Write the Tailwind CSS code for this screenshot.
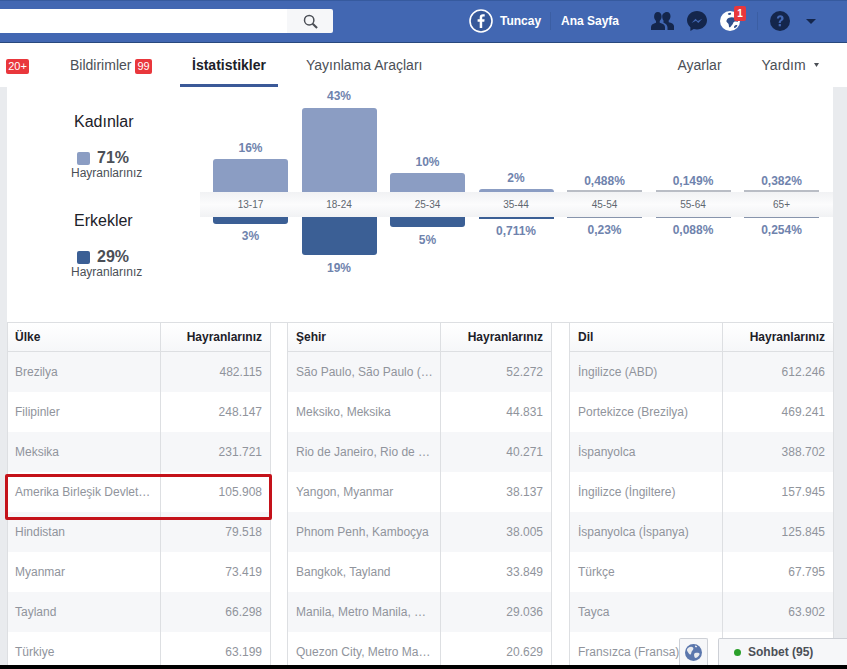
<!DOCTYPE html>
<html lang="tr">
<head>
<meta charset="utf-8">
<title>İstatistikler</title>
<script src="https://cdn.jsdelivr.net/npm/@tailwindcss/browser@4"></script>
</head>
<body class="m-0">
<div class="relative w-[847px] h-[669px] overflow-hidden bg-[#e9ebee] font-['Liberation_Sans',Arial,sans-serif]">

  <!-- Top bar -->
  <header class="h-[43px] pb-[1px] bg-[#4267b2] border-t border-t-[#365a9e] border-b border-b-[#29487d] flex items-center">
    <div class="w-[333px] h-[24px] flex rounded-r-[2px] overflow-hidden">
      <div class="w-[287px] bg-white"></div>
      <div class="w-[46px] bg-[#f6f7f9] flex items-center justify-center">
        <svg class="w-[15px] h-[15px]" viewBox="0 0 16 16" fill="none" stroke="#4b4f56" stroke-width="1.6"><circle cx="6.600" cy="6.600" r="5"/><path d="M10.300 10.300 15 15" stroke-width="2.200"/></svg>
      </div>
    </div>
    <div class="w-[136px] shrink-0"></div>
    <svg class="w-[24px] h-[24px] shrink-0" viewBox="0 0 24 24"><circle cx="12" cy="12" r="11" fill="#365899" stroke="#fff" stroke-width="1.600"/><path d="M13.200 19v-6.300h2.100l.3-2.500h-2.400V8.700c0-.7.2-1.200 1.200-1.200h1.300V5.300c-.2 0-1-.1-1.900-.1-1.900 0-3.100 1.100-3.100 3.200v1.800H8.600v2.500h2.100V19z" fill="#fff"/></svg>
    <span class="ml-[7px] w-[40px] text-[12px] font-bold text-white">Tuncay</span>
    <div class="ml-[10px] w-px h-[18px] bg-[#3b5ea3]"></div>
    <span class="ml-[10px] w-[58px] text-[12px] font-bold text-white whitespace-nowrap">Ana Sayfa</span>
    <svg class="ml-[32px] w-[23px] h-[18px] shrink-0" viewBox="0 0 23 18" fill="#14264c"><path d="M16 0c2.200 0 3.500 1.800 3.500 4.200 0 1.900-.8 3.400-1.800 4.300v1.800c2.600.6 5.300 1.800 5.300 3.700V18h-6.500v-2.500c0-2.400-1.800-3.800-4-4.800V8.500c-.8-1-1.300-2.600-1.300-4.300C11.200 1.800 13.800 0 16 0z"/><path d="M6.800 0c2.300 0 3.800 1.900 3.800 4.500 0 2-.8 3.500-1.900 4.400v1.900c2.900.7 5.300 2 5.300 4.200V18H0v-2.900c0-2.200 2.400-3.600 5-4.300V8.900C3.900 8 3.100 6.500 3.100 4.500 3.100 1.900 4.500 0 6.800 0z"/></svg>
    <svg class="ml-[13px] w-[20px] h-[20px] shrink-0" viewBox="0 0 20 20"><path d="M10 0C4.500 0 0 4.100 0 9.300c0 2.800 1.300 5.200 3.400 6.900V20l3.300-1.900c1 .3 2.100.5 3.300.5 5.500 0 10-4.100 10-9.300S15.500 0 10 0z" fill="#14264c"/><path d="M4.500 12l4-4.300 2.300 2.300 4.500-2.300-4 4.300-2.300-2.300z" fill="#4267b2"/></svg>
    <div class="relative ml-[13px] w-[20px] h-[20px] shrink-0">
      <svg class="w-[20px] h-[20px]" viewBox="0 0 20 20"><circle cx="10" cy="10" r="10" fill="#fff"/><path d="M8.500 7c2-1.200 4.500-1 6.500-.2s3.500 2 3 3.700c-1 .8-2.500-.3-3.700.2s-1.300 2.500-2.300 3.300-1.500 2.800-2.500 2.300-.3-2.800-1.300-3.800-2.200-1.700-1.700-3 .9-1.600 2-2.500z" fill="#2f4e8c"/><path d="M8 2.500c1-.7 2.500-1 3-.3s-.5 1.800-1.500 1.800S7.300 3.200 8 2.500zM15 14.500c1-.5 2.300-.7 2.300 0s-1.800 2.700-2.800 2.500-.4-2 .5-2.500z" fill="#2f4e8c"/></svg>
      <span class="absolute left-[14px] top-[-5px] w-[12px] h-[15px] rounded-[2px] bg-[#e9373c] text-white text-[10px] font-bold leading-[15px] text-center">1</span>
    </div>
    <div class="ml-[17px] w-px h-[18px] bg-[#3b5ea3]"></div>
    <svg class="ml-[12px] w-[20px] h-[20px] shrink-0" viewBox="0 0 20 20"><circle cx="10" cy="10" r="10" fill="#14264c"/><path d="M6.800 7.600C7 5.300 8.500 4.300 10.300 4.300c2 0 3.300 1.200 3.300 2.900 0 1.500-.9 2.200-1.800 2.900-.7.500-1 .9-1 1.800H8.700c0-1.500.5-2.300 1.400-3 .7-.5 1.100-.9 1.100-1.600 0-.7-.4-1.100-1-1.100-.7 0-1.100.5-1.200 1.400z" fill="#4267b2"/><rect x="8.700" y="13" width="2.200" height="2.300" fill="#4267b2"/></svg>
    <svg class="ml-[16px] w-[10px] h-[5px] shrink-0" viewBox="0 0 10 5"><path d="M0 0h10L5 5z" fill="#14264c"/></svg>
  </header>

  <!-- Tabs -->
  <nav class="relative h-[44px] bg-white flex text-[14px] text-[#4b4f56]">
    <div class="absolute left-[6px] top-[16px] w-[23px] h-[15px] rounded-[2px] bg-[#e9373c] text-white text-[11px] leading-[15px] text-center">20+</div>
    <div class="ml-[70px] pt-[14px] w-[65px] leading-[16px]">Bildirimler</div>
    <div class="mt-[16px] w-[17px] h-[15px] rounded-[2px] bg-[#e9373c] text-white text-[11px] leading-[15px] text-center">99</div>
    <div class="ml-[28px] w-[98px] h-[44px] border-b-[3px] border-b-[#3b5998] pt-[14px] leading-[16px] text-center font-bold text-[#1d2129]">İstatistikler</div>
    <div class="ml-[28px] pt-[14px] leading-[16px] whitespace-nowrap">Yayınlama Araçları</div>
    <div class="ml-[255px] pt-[14px] leading-[16px]">Ayarlar</div>
    <div class="ml-[40px] pt-[14px] leading-[16px]">Yardım</div>
    <svg class="ml-[8px] mt-[20px] w-[5px] h-[4px]" viewBox="0 0 5 4"><path d="M0 0h5L2.500 4z" fill="#4b4f56"/></svg>
  </nav>

  <!-- Card -->
  <main class="ml-[7px] w-[826px] bg-white">
    <section class="h-[235px] flex">
      <!-- Legend -->
      <div class="w-[193px] shrink-0 pl-[64px] pt-[25px]">
        <div class="pl-[3px] h-[20px] text-[16px] leading-[20px] text-[#1d2129]">Kadınlar</div>
        <div class="mt-[16px] pl-[6px] h-[20px] flex items-center gap-[7px]">
          <span class="w-[13px] h-[13px] rounded-[2px] bg-[#8b9dc3]"></span>
          <span class="text-[16px] font-bold text-[#4b4f56]">71%</span>
        </div>
        <div class="-mt-[2px] h-[14px] text-[12px] leading-[14px] text-[#4b4f56]">Hayranlarınız</div>
        <div class="mt-[31px] pl-[3px] h-[20px] text-[16px] leading-[20px] text-[#1d2129]">Erkekler</div>
        <div class="mt-[16px] pl-[6px] h-[20px] flex items-center gap-[7px]">
          <span class="w-[13px] h-[13px] rounded-[2px] bg-[#3b5f95]"></span>
          <span class="text-[16px] font-bold text-[#4b4f56]">29%</span>
        </div>
        <div class="-mt-[2px] h-[14px] text-[12px] leading-[14px] text-[#4b4f56]">Hayranlarınız</div>
      </div>
      <!-- Chart -->
      <div class="flex-1 flex flex-col text-[12px] font-bold text-[#6f83ad] text-center">
        <div class="h-[105px] pl-[13px] flex items-end gap-[13.5px]">
          <div class="w-[75px]"><div class="mb-[2px]">16%</div><div class="h-[33px] rounded-t-[3px] bg-[#8b9dc3]"></div></div>
          <div class="w-[75px]"><div class="mb-[3px]">43%</div><div class="h-[84px] rounded-t-[3px] bg-[#8b9dc3]"></div></div>
          <div class="w-[75px]"><div class="mb-[2px]">10%</div><div class="h-[19px] rounded-t-[3px] bg-[#8b9dc3]"></div></div>
          <div class="w-[75px]"><div class="mb-[2px]">2%</div><div class="h-[3px] rounded-t-[3px] bg-[#8b9dc3]"></div></div>
          <div class="w-[75px]"><div class="mb-[0px]">0,488%</div><div class="h-[2px] bg-[#b9bdc5]"></div></div>
          <div class="w-[75px]"><div class="mb-[0px]">0,149%</div><div class="h-[2px] bg-[#b9bdc5]"></div></div>
          <div class="w-[75px]"><div class="mb-[0px]">0,382%</div><div class="h-[2px] bg-[#b9bdc5]"></div></div>
        </div>
        <div class="h-[25px] pl-[13px] flex gap-[13.5px] items-center bg-gradient-to-b from-[#f1f2f4] via-[#fcfcfd] to-[#f1f2f4] text-[10px] font-normal text-[#606770]">
          <div class="w-[75px]">13-17</div>
          <div class="w-[75px]">18-24</div>
          <div class="w-[75px]">25-34</div>
          <div class="w-[75px]">35-44</div>
          <div class="w-[75px]">45-54</div>
          <div class="w-[75px]">55-64</div>
          <div class="w-[75px]">65+</div>
        </div>
        <div class="h-[105px] pl-[13px] flex items-start gap-[13.5px]">
          <div class="w-[75px]"><div class="h-[7px] rounded-b-[3px] bg-[#3b5f95]"></div><div class="mt-[3px]">3%</div></div>
          <div class="w-[75px]"><div class="h-[38px] rounded-b-[3px] bg-[#3b5f95]"></div><div class="mt-[4px]">19%</div></div>
          <div class="w-[75px]"><div class="h-[10px] rounded-b-[3px] bg-[#3b5f95]"></div><div class="mt-[4px]">5%</div></div>
          <div class="w-[75px]"><div class="h-[2px] bg-[#3b5f95]"></div><div class="mt-[3px]">0,711%</div></div>
          <div class="w-[75px]"><div class="h-[1px] bg-[#8794ac]"></div><div class="mt-[3px]">0,23%</div></div>
          <div class="w-[75px]"><div class="h-[1px] bg-[#8794ac]"></div><div class="mt-[3px]">0,088%</div></div>
          <div class="w-[75px]"><div class="h-[1px] bg-[#8794ac]"></div><div class="mt-[3px]">0,254%</div></div>
        </div>
      </div>
    </section>

    <!-- Tables -->
    <section class="border-t border-t-[#dddfe2] flex text-[12px]">
      <!-- Ülke -->
      <div class="w-[264px] shrink-0 border-l border-r border-[#dddfe2]">
        <div class="h-[29px] flex font-bold text-[#1d2129] bg-gradient-to-b from-white to-[#f6f7f9] border-b border-b-[#dddfe2] leading-[28px]">
          <div class="w-[153px] pl-[7px] border-r border-r-[#dddfe2]">Ülke</div>
          <div class="flex-1 pr-[8px] text-right">Hayranlarınız</div>
        </div>
        <div class="h-[40px] flex bg-[#f6f7f9] text-[#90949c] leading-[41px]"><div class="w-[153px] pl-[7px] border-r border-r-[#dddfe2] whitespace-nowrap overflow-hidden">Brezilya</div><div class="flex-1 pr-[8px] text-right">482.115</div></div>
        <div class="h-[40px] flex bg-white text-[#90949c] leading-[41px]"><div class="w-[153px] pl-[7px] border-r border-r-[#dddfe2] whitespace-nowrap overflow-hidden">Filipinler</div><div class="flex-1 pr-[8px] text-right">248.147</div></div>
        <div class="h-[40px] flex bg-[#f6f7f9] text-[#90949c] leading-[41px]"><div class="w-[153px] pl-[7px] border-r border-r-[#dddfe2] whitespace-nowrap overflow-hidden">Meksika</div><div class="flex-1 pr-[8px] text-right">231.721</div></div>
        <div class="h-[40px] flex bg-white text-[#90949c] leading-[41px]"><div class="w-[153px] pl-[7px] border-r border-r-[#dddfe2] whitespace-nowrap overflow-hidden">Amerika Birleşik Devlet…</div><div class="flex-1 pr-[8px] text-right">105.908</div></div>
        <div class="h-[40px] flex bg-[#f6f7f9] text-[#90949c] leading-[41px]"><div class="w-[153px] pl-[7px] border-r border-r-[#dddfe2] whitespace-nowrap overflow-hidden">Hindistan</div><div class="flex-1 pr-[8px] text-right">79.518</div></div>
        <div class="h-[40px] flex bg-white text-[#90949c] leading-[41px]"><div class="w-[153px] pl-[7px] border-r border-r-[#dddfe2] whitespace-nowrap overflow-hidden">Myanmar</div><div class="flex-1 pr-[8px] text-right">73.419</div></div>
        <div class="h-[40px] flex bg-[#f6f7f9] text-[#90949c] leading-[41px]"><div class="w-[153px] pl-[7px] border-r border-r-[#dddfe2] whitespace-nowrap overflow-hidden">Tayland</div><div class="flex-1 pr-[8px] text-right">66.298</div></div>
        <div class="h-[40px] flex bg-white text-[#90949c] leading-[41px]"><div class="w-[153px] pl-[7px] border-r border-r-[#dddfe2] whitespace-nowrap overflow-hidden">Türkiye</div><div class="flex-1 pr-[8px] text-right">63.199</div></div>
      </div>
      <!-- Şehir -->
      <div class="ml-[16px] w-[265px] shrink-0 border-l border-r border-[#dddfe2]">
        <div class="h-[29px] flex font-bold text-[#1d2129] bg-gradient-to-b from-white to-[#f6f7f9] border-b border-b-[#dddfe2] leading-[28px]">
          <div class="w-[153px] pl-[8px] border-r border-r-[#dddfe2]">Şehir</div>
          <div class="flex-1 pr-[8px] text-right">Hayranlarınız</div>
        </div>
        <div class="h-[40px] flex bg-[#f6f7f9] text-[#90949c] leading-[41px]"><div class="w-[153px] pl-[8px] border-r border-r-[#dddfe2] whitespace-nowrap overflow-hidden">São Paulo, São Paulo (…</div><div class="flex-1 pr-[8px] text-right">52.272</div></div>
        <div class="h-[40px] flex bg-white text-[#90949c] leading-[41px]"><div class="w-[153px] pl-[8px] border-r border-r-[#dddfe2] whitespace-nowrap overflow-hidden">Meksiko, Meksika</div><div class="flex-1 pr-[8px] text-right">44.831</div></div>
        <div class="h-[40px] flex bg-[#f6f7f9] text-[#90949c] leading-[41px]"><div class="w-[153px] pl-[8px] border-r border-r-[#dddfe2] whitespace-nowrap overflow-hidden">Rio de Janeiro, Rio de …</div><div class="flex-1 pr-[8px] text-right">40.271</div></div>
        <div class="h-[40px] flex bg-white text-[#90949c] leading-[41px]"><div class="w-[153px] pl-[8px] border-r border-r-[#dddfe2] whitespace-nowrap overflow-hidden">Yangon, Myanmar</div><div class="flex-1 pr-[8px] text-right">38.137</div></div>
        <div class="h-[40px] flex bg-[#f6f7f9] text-[#90949c] leading-[41px]"><div class="w-[153px] pl-[8px] border-r border-r-[#dddfe2] whitespace-nowrap overflow-hidden">Phnom Penh, Kamboçya</div><div class="flex-1 pr-[8px] text-right">38.005</div></div>
        <div class="h-[40px] flex bg-white text-[#90949c] leading-[41px]"><div class="w-[153px] pl-[8px] border-r border-r-[#dddfe2] whitespace-nowrap overflow-hidden">Bangkok, Tayland</div><div class="flex-1 pr-[8px] text-right">33.849</div></div>
        <div class="h-[40px] flex bg-[#f6f7f9] text-[#90949c] leading-[41px]"><div class="w-[153px] pl-[8px] border-r border-r-[#dddfe2] whitespace-nowrap overflow-hidden">Manila, Metro Manila, …</div><div class="flex-1 pr-[8px] text-right">29.036</div></div>
        <div class="h-[40px] flex bg-white text-[#90949c] leading-[41px]"><div class="w-[153px] pl-[8px] border-r border-r-[#dddfe2] whitespace-nowrap overflow-hidden">Quezon City, Metro Ma…</div><div class="flex-1 pr-[8px] text-right">20.629</div></div>
      </div>
      <!-- Dil -->
      <div class="ml-[17px] w-[265px] shrink-0 border-l border-r border-[#dddfe2]">
        <div class="h-[29px] flex font-bold text-[#1d2129] bg-gradient-to-b from-white to-[#f6f7f9] border-b border-b-[#dddfe2] leading-[28px]">
          <div class="w-[153px] pl-[8px] border-r border-r-[#dddfe2]">Dil</div>
          <div class="flex-1 pr-[8px] text-right">Hayranlarınız</div>
        </div>
        <div class="h-[40px] flex bg-[#f6f7f9] text-[#90949c] leading-[41px]"><div class="w-[153px] pl-[8px] border-r border-r-[#dddfe2] whitespace-nowrap overflow-hidden">İngilizce (ABD)</div><div class="flex-1 pr-[8px] text-right">612.246</div></div>
        <div class="h-[40px] flex bg-white text-[#90949c] leading-[41px]"><div class="w-[153px] pl-[8px] border-r border-r-[#dddfe2] whitespace-nowrap overflow-hidden">Portekizce (Brezilya)</div><div class="flex-1 pr-[8px] text-right">469.241</div></div>
        <div class="h-[40px] flex bg-[#f6f7f9] text-[#90949c] leading-[41px]"><div class="w-[153px] pl-[8px] border-r border-r-[#dddfe2] whitespace-nowrap overflow-hidden">İspanyolca</div><div class="flex-1 pr-[8px] text-right">388.702</div></div>
        <div class="h-[40px] flex bg-white text-[#90949c] leading-[41px]"><div class="w-[153px] pl-[8px] border-r border-r-[#dddfe2] whitespace-nowrap overflow-hidden">İngilizce (İngiltere)</div><div class="flex-1 pr-[8px] text-right">157.945</div></div>
        <div class="h-[40px] flex bg-[#f6f7f9] text-[#90949c] leading-[41px]"><div class="w-[153px] pl-[8px] border-r border-r-[#dddfe2] whitespace-nowrap overflow-hidden">İspanyolca (İspanya)</div><div class="flex-1 pr-[8px] text-right">125.845</div></div>
        <div class="h-[40px] flex bg-white text-[#90949c] leading-[41px]"><div class="w-[153px] pl-[8px] border-r border-r-[#dddfe2] whitespace-nowrap overflow-hidden">Türkçe</div><div class="flex-1 pr-[8px] text-right">67.795</div></div>
        <div class="h-[40px] flex bg-[#f6f7f9] text-[#90949c] leading-[41px]"><div class="w-[153px] pl-[8px] border-r border-r-[#dddfe2] whitespace-nowrap overflow-hidden">Tayca</div><div class="flex-1 pr-[8px] text-right">63.902</div></div>
        <div class="h-[40px] flex bg-white text-[#90949c] leading-[41px]"><div class="w-[153px] pl-[8px] border-r border-r-[#dddfe2] whitespace-nowrap overflow-hidden">Fransızca (Fransa)</div><div class="flex-1"></div></div>
      </div>
    </section>
  </main>

  <!-- Red highlight over the US row -->
  <div class="absolute left-[5px] top-[474px] w-[267px] h-[46px] border-[3px] border-[#c4121a] rounded-[2px]"></div>

  <!-- Chat dock -->
  <div class="absolute left-[679px] top-[638px] w-[29px] h-[27px] bg-[#f6f7f9] border border-[#cdd0d6] border-b-0 rounded-t-[2px] flex items-center justify-center">
    <svg class="w-[17px] h-[17px]" viewBox="0 0 17 17"><circle cx="8.500" cy="8.500" r="8.500" fill="#5b77ad"/><path d="M3 4c2-1.500 4-1.500 5-.5s0 2.500-1 3.500-.5 3-1.500 3.500S3.500 9 2.500 7.500 2 5 3 4zm7 5c2-.5 4-.5 4.500.5s-1 3-2.500 4-2.500.5-2.800-1.500 0-2.500.8-3zM10 1.500c1.500 0 2.500.8 2 1.500s-2.500.5-2-1.500z" fill="#e9ebee"/></svg>
  </div>
  <div class="absolute left-[718px] top-[638px] w-[130px] h-[27px] bg-[#f6f7f9] border border-[#cdd0d6] border-b-0 rounded-tl-[2px] flex items-center pl-[15px] gap-[7px] text-[12px] font-bold text-[#4b4f56]">
    <span class="w-[7px] h-[7px] rounded-full bg-[#2ba02b]"></span>
    <span>Sohbet (95)</span>
  </div>
  <!-- Black bottom edge of the capture -->
  <div class="absolute left-0 top-[665px] w-full h-[4px] bg-black"></div>
</div>
</body>
</html>
